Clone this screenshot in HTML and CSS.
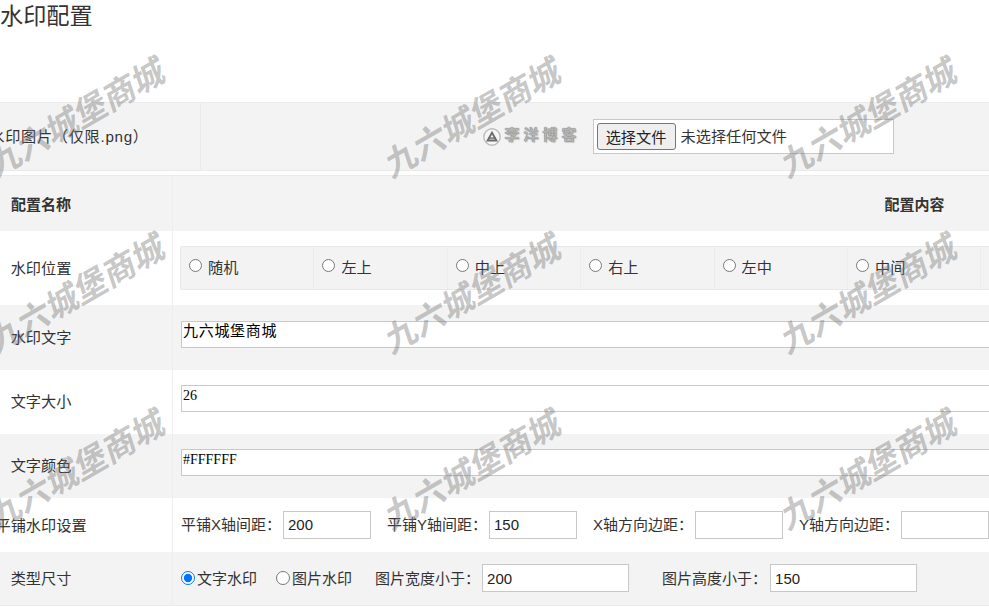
FILE: index.html
```html
<!DOCTYPE html>
<html lang="zh-CN">
<head>
<meta charset="utf-8">
<title>水印配置</title>
<link rel="stylesheet" href="styles.css">
</head>
<body>
<h1 class="title">水印配置</h1>
<table class="upload">
  <tr>
    <td class="upload-name"><span class="upload-label">水印图片（仅限.png）</span></td>
    <td class="upload-body">
      <div class="upload-row">
        <div class="logo">
          <svg class="logo-icon" width="18" height="18" viewBox="0 0 18 18">
            <circle cx="9" cy="9" r="8.2" fill="#f6f6f6" stroke="#bdbdbd" stroke-width="1.4"/>
            <path d="M9 2.8 15 13.4H3Z" fill="#6a6a6a"/>
            <path d="M9 6.4 11.8 11.4H6.2Z" fill="#f4f4f4"/>
            <rect x="5.5" y="9.4" width="7" height="1.4" fill="#6a6a6a"/>
          </svg>
          <span class="logo-text">李洋博客</span>
        </div>
        <div class="file-box">
          <button class="file-btn" type="button">选择文件</button>
          <span class="file-name">未选择任何文件</span>
        </div>
      </div>
    </td>
  </tr>
</table>
<table class="config">
  <tr class="row-head">
    <th class="name"><span class="label">配置名称</span></th>
    <th class="head-value">配置内容</th>
  </tr>
  <tr class="row-pos">
    <td class="name"><span class="label">水印位置</span></td>
    <td class="value">
      <div class="radios">
        <label class="pos"><input type="radio" name="pos">随机</label>
        <label class="pos"><input type="radio" name="pos">左上</label>
        <label class="pos"><input type="radio" name="pos">中上</label>
        <label class="pos"><input type="radio" name="pos">右上</label>
        <label class="pos"><input type="radio" name="pos">左中</label>
        <label class="pos"><input type="radio" name="pos">中间</label>
        <label class="pos"><input type="radio" name="pos">右中</label>
      </div>
    </td>
  </tr>
  <tr class="row-text row-first shade">
    <td class="name"><span class="label">水印文字</span></td>
    <td class="value"><textarea class="area area-cjk" rows="1">九六城堡商城</textarea></td>
  </tr>
  <tr class="row-text">
    <td class="name"><span class="label">文字大小</span></td>
    <td class="value"><textarea class="area" rows="1">26</textarea></td>
  </tr>
  <tr class="row-text shade">
    <td class="name"><span class="label">文字颜色</span></td>
    <td class="value"><textarea class="area" rows="1">#FFFFFF</textarea></td>
  </tr>
  <tr class="row-tile">
    <td class="name"><span class="label">平铺水印设置</span></td>
    <td class="value">
      <div class="fields">
        <span class="field">平铺X轴间距：<input class="num" value="200"></span>
        <span class="field">平铺Y轴间距：<input class="num" value="150"></span>
        <span class="field">X轴方向边距：<input class="num"></span>
        <span class="field">Y轴方向边距：<input class="num"></span>
      </div>
    </td>
  </tr>
  <tr class="row-type shade">
    <td class="name"><span class="label">类型尺寸</span></td>
    <td class="value">
      <div class="types">
        <label class="type"><input type="radio" name="type" checked>文字水印</label>
        <label class="type"><input type="radio" name="type">图片水印</label>
        <span class="size size-w">图片宽度小于：<input class="num wide" value="200"></span>
        <span class="size size-h">图片高度小于：<input class="num wide" value="150"></span>
      </div>
    </td>
  </tr>
</table>
<div class="marks" aria-hidden="true">
  <span class="mark">九六城堡商城</span><span class="mark">九六城堡商城</span><span class="mark">九六城堡商城</span>
  <span class="mark">九六城堡商城</span><span class="mark">九六城堡商城</span><span class="mark">九六城堡商城</span>
  <span class="mark">九六城堡商城</span><span class="mark">九六城堡商城</span><span class="mark">九六城堡商城</span>
</div>
</body>
</html>
```

FILE: styles.css
```css
html, body {
  margin: 0;
  padding: 0;
  background: #fff;
  overflow: hidden;
  height: 610px;
}
body {
  position: relative;
  width: 989px;
  font-family: "Liberation Sans", "Noto Sans CJK SC", sans-serif;
  font-size: 15.2px;
  color: #333;
}
input, button, textarea { font-family: "Liberation Sans", "Noto Sans CJK SC", sans-serif; }

.title {
  margin: 0;
  height: 102px;
  padding-top: 1px;
  box-sizing: border-box;
  font-size: 23.2px;
  font-weight: 400;
  line-height: 31px;
  color: #333;
}

table { border-collapse: collapse; table-layout: fixed; }

/* upload table */
.upload {
  width: 1175px;
  height: 69px;
  background: #f3f3f3;
  margin-bottom: 4px;
}
.upload td { border: 1px solid #eaeaea; border-left: 0; border-right: 0; padding: 0; }
.upload-name { width: 200px; border-right: 1px solid #eaeaea !important; }
.upload-label {
  display: flex;
  justify-content: center;
  width: 138px;
  white-space: nowrap;
  letter-spacing: 0.7px;
  padding-bottom: 4px;
}
.upload-row { display: flex; align-items: center; justify-content: center; gap: 13px; }
.logo { display: flex; align-items: center; width: 97px; gap: 4px; }
.logo-icon { flex: none; }
.logo-text {
  font-size: 15px;
  font-weight: 700;
  letter-spacing: 4px;
  line-height: 18px;
  padding-bottom: 3px;
  white-space: nowrap;
  color: #b4b4b4;
  text-shadow: 0 0 1px #555, 1px 1px 1px #ccc;
}
.file-box {
  display: flex;
  align-items: center;
  width: 301px;
  height: 35px;
  box-sizing: border-box;
  background: #fff;
  border: 1px solid #c8c8c8;
  padding-left: 3px;
  gap: 5px;
}
.file-btn {
  width: 79px;
  height: 27px;
  padding: 0 0 2px;
  font-size: 15.2px;
  color: #222;
  background: #efefef;
  border: 1px solid #767676;
  border-radius: 3px;
}
.file-name { font-size: 15.2px; color: #333; padding-bottom: 4px; }

/* config table */
.config { width: 1656px; }
.config td, .config th { padding: 0; }
.name { width: 172px; border-right: 1px solid #eee; }
.label {
  display: flex;
  justify-content: center;
  width: 82px;
  white-space: nowrap;
  font-weight: 400;
  padding-bottom: 2px;
}
th .label, .head-value { font-weight: 700; font-size: 15px; }
th .label { padding: 1px 0 0; }
.row-head { height: 55px; background: #f3f3f3; border-top: 1px solid #eaeaea; }
.head-value { text-align: center; }
.row-pos { height: 74px; }
.shade { background: #f3f3f3; }
.row-text { height: 64px; }
.row-text .label { padding-bottom: 3px; }
.row-text .value { vertical-align: top; padding-top: 15px; }
.row-first { height: 65px; }
.row-first .value { padding-top: 16px; }
.row-tile { height: 54px; }
.row-type { height: 54px; border-bottom: 1px solid #eaeaea; }

.value { padding-left: 7px !important; }
.radios {
  display: flex;
  width: fit-content;
  height: 44px;
  box-sizing: border-box;
  background: #f3f3f3;
  border: 1px solid #e8e8e8;
  border-radius: 2px;
}
.pos {
  display: flex;
  align-items: center;
  width: 133.4px;
  height: 100%;
  padding-left: 8px;
  box-sizing: border-box;
  border-right: 1px solid #ececec;
  padding-bottom: 4px;
  gap: 6px;
}
.pos input { margin: 0 0 1px; width: 13px; height: 13px; }
.area {
  display: block;
  width: 1470px;
  height: 27px;
  margin-left: 1px;
  padding: 2px 1px 0;
  box-sizing: border-box;
  border: 1px solid #c8c8c8;
  background: #fff;
  font-family: "Liberation Serif", serif;
  font-size: 14px;
  line-height: 16px;
  color: #000;
  resize: none;
  overflow: hidden;
  border-radius: 0;
  outline: 0;
}
.area-cjk {
  padding-top: 0;
  font-family: "Noto Sans CJK SC", sans-serif;
  font-size: 15px;
  letter-spacing: 0.7px;
  line-height: 15px;
}
.fields {
  display: flex;
  gap: 16px;
  margin-left: 1px;
  padding-bottom: 2px;
  white-space: nowrap;
  font-size: 15px;
}
.field { display: flex; align-items: center; }
.num {
  box-sizing: border-box;
  width: 88px;
  height: 28px;
  margin-top: 2px;
  padding: 0 4px;
  border: 1px solid #c8c8c8;
  background: #fff;
  font-size: 15px;
  color: #222;
  border-radius: 0;
  outline: 0;
}
.field .num { margin-left: 2px; }
.types {
  display: flex;
  align-items: center;
  margin-left: 1px;
  padding-bottom: 2px;
  white-space: nowrap;
  font-size: 15px;
}
.type { display: flex; align-items: center; gap: 2px; margin-right: 19px; }
.type input { margin: 2px 0 0; width: 14px; height: 14px; }
.size { display: flex; align-items: center; }
.size-w { margin-left: 4px; margin-right: 33px; }
.wide { width: 147px; margin-left: 2px; }
.size-h .num { margin-left: 3px; }

/* watermark overlay */
.marks {
  position: absolute;
  left: -20px;
  top: 65px;
  display: grid;
  grid-template-columns: repeat(3, 396px);
  grid-auto-rows: 176px;
  pointer-events: none;
}
.mark {
  display: block;
  width: 174px;
  height: 118px;
  line-height: 118px;
  text-align: center;
  white-space: nowrap;
  font-size: 33px;
  font-weight: 700;
  color: rgba(120, 120, 120, 0.42);
  transform: rotate(-30deg) skewX(-12deg);
}
```
